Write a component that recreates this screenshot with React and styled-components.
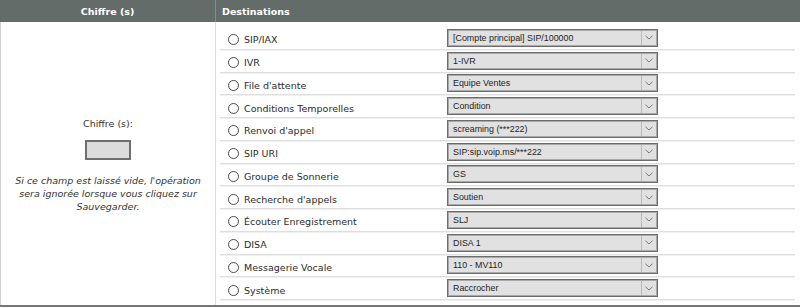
import React from "react";
import styled, { createGlobalStyle } from "styled-components";

const GlobalStyle = createGlobalStyle`
  html, body {
    margin: 0;
    padding: 0;
    background: #ffffff;
  }
  body {
    font-family: "DejaVu Sans", Verdana, sans-serif;
    color: #333333;
  }
`;

const Table = styled.div`
  width: 800px;
  display: grid;
  grid-template-columns: 216px 1fr;
  grid-template-rows: 22px auto;
  border-bottom: 2px solid #767676;
`;

const HeadCell = styled.div`
  background: #646c6a;
  color: #ffffff;
  font-weight: bold;
  font-size: 9.5px;
  display: flex;
  align-items: center;
  justify-content: ${(p) => (p.$center ? "center" : "flex-start")};
  padding-left: ${(p) => (p.$center ? "0" : "6px")};
  border-right: ${(p) => (p.$divider ? "1px solid #858c8a" : "none")};
`;

const DigitCell = styled.div`
  border-left: 1px solid #cfcfcf;
  border-right: 1px solid #dddddd;
  display: flex;
  flex-direction: column;
  align-items: center;
  justify-content: center;
  padding: 4px 8px 0;
  text-align: center;
`;

const DigitLabel = styled.div`
  font-size: 9.5px;
  color: #333333;
`;

const DigitInput = styled.div`
  width: 46px;
  height: 20px;
  box-sizing: border-box;
  margin: 11px 0 14px;
  background: #dcdcdc;
  border: 2px solid #6e6e6e;
`;

const Hint = styled.div`
  font-size: 9.5px;
  font-style: italic;
  line-height: 13px;
  color: #333333;
`;

const DestCell = styled.div`
  padding: 5px 5px 5px 4px;
`;

const Row = styled.div`
  height: 22.75px;
  box-sizing: border-box;
  display: grid;
  grid-template-columns: 227px 211px 1fr;
  align-items: center;
  border-bottom: 1px solid #dedede;
  box-shadow: 0 1px 0 #f0f0f0;
`;

const Option = styled.label`
  display: flex;
  align-items: center;
  gap: 5px;
  padding: 4px 0 0 8px;
  font-size: 9.5px;
  color: #2b2b2b;
  white-space: nowrap;
`;

const Radio = styled.span`
  width: 11px;
  height: 11px;
  box-sizing: border-box;
  border-radius: 50%;
  border: 1px solid #4a4a4a;
  background: #ffffff;
  flex: none;
`;

const Select = styled.div`
  height: 18px;
  box-sizing: border-box;
  display: flex;
  align-items: stretch;
  background: #e1e1e1;
  border: 1px solid #6c6c6c;
  box-shadow: inset 0 0 0 1px #a9a9a9;
  font-family: "Liberation Sans", Arial, sans-serif;
  font-size: 8.9px;
  color: #1e1e1e;
`;

const SelectText = styled.span`
  flex: 1;
  display: flex;
  align-items: center;
  padding-left: 5px;
  white-space: nowrap;
  overflow: hidden;
`;

const Arrow = styled.span`
  width: 14px;
  flex: none;
  display: flex;
  align-items: center;
  justify-content: center;
  border-left: 1px solid #b8b8b8;
  margin: 1px 1px 1px 0;
`;

const Chevron = () => (
  <svg width="8" height="5" viewBox="0 0 8 5">
    <path d="M0.5 0.8 L4 4 L7.5 0.8" fill="none" stroke="#7a7a7a" strokeWidth="1" />
  </svg>
);

const destinations = [
  ["SIP/IAX", "[Compte principal] SIP/100000"],
  ["IVR", "1-IVR"],
  ["File d'attente", "Equipe Ventes"],
  ["Conditions Temporelles", "Condition"],
  ["Renvoi d'appel", "screaming (***222)"],
  ["SIP URI", "SIP:sip.voip.ms/***222"],
  ["Groupe de Sonnerie", "GS"],
  ["Recherche d'appels", "Soutien"],
  ["Écouter Enregistrement", "SLJ"],
  ["DISA", "DISA 1"],
  ["Messagerie Vocale", "110 - MV110"],
  ["Système", "Raccrocher"],
];

export default function App() {
  return (
    <>
      <GlobalStyle />
      <Table>
        <HeadCell $center $divider>Chiffre (s)</HeadCell>
        <HeadCell>Destinations</HeadCell>
        <DigitCell>
          <DigitLabel>Chiffre (s):</DigitLabel>
          <DigitInput />
          <Hint>
            Si ce champ est laissé vide, l'opération
            <br />
            sera ignorée lorsque vous cliquez sur
            <br />
            Sauvegarder.
          </Hint>
        </DigitCell>
        <DestCell>
          {destinations.map(([label, value]) => (
            <Row key={label}>
              <Option>
                <Radio />
                {label}
              </Option>
              <Select>
                <SelectText>{value}</SelectText>
                <Arrow>
                  <Chevron />
                </Arrow>
              </Select>
            </Row>
          ))}
        </DestCell>
      </Table>
    </>
  );
}
